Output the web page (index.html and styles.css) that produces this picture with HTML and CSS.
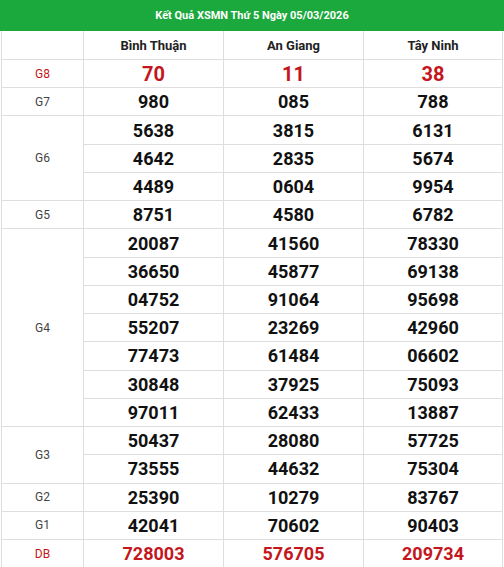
FILE: index.html
```html
<!DOCTYPE html>
<html lang="vi">
<head>
<meta charset="utf-8">
<title>Kết Quả XSMN</title>
<link rel="stylesheet" href="styles.css">
</head>
<body>
<div class="title">Kết Quả XSMN Thứ 5 Ngày 05/03/2026</div>
<div class="grid">
  <div class="cell corner"></div>
  <div class="cell prov">Bình Thuận</div>
  <div class="cell prov">An Giang</div>
  <div class="cell prov">Tây Ninh</div>

  <div class="cell label red">G8</div>
  <div class="cell num big red">70</div>
  <div class="cell num big red">11</div>
  <div class="cell num big red">38</div>

  <div class="cell label">G7</div>
  <div class="cell num">980</div>
  <div class="cell num">085</div>
  <div class="cell num">788</div>

  <div class="cell label span3">G6</div>
  <div class="cell num">5638</div>
  <div class="cell num">3815</div>
  <div class="cell num">6131</div>
  <div class="cell num">4642</div>
  <div class="cell num">2835</div>
  <div class="cell num">5674</div>
  <div class="cell num">4489</div>
  <div class="cell num">0604</div>
  <div class="cell num">9954</div>

  <div class="cell label">G5</div>
  <div class="cell num">8751</div>
  <div class="cell num">4580</div>
  <div class="cell num">6782</div>

  <div class="cell label span7">G4</div>
  <div class="cell num">20087</div>
  <div class="cell num">41560</div>
  <div class="cell num">78330</div>
  <div class="cell num">36650</div>
  <div class="cell num">45877</div>
  <div class="cell num">69138</div>
  <div class="cell num">04752</div>
  <div class="cell num">91064</div>
  <div class="cell num">95698</div>
  <div class="cell num">55207</div>
  <div class="cell num">23269</div>
  <div class="cell num">42960</div>
  <div class="cell num">77473</div>
  <div class="cell num">61484</div>
  <div class="cell num">06602</div>
  <div class="cell num">30848</div>
  <div class="cell num">37925</div>
  <div class="cell num">75093</div>
  <div class="cell num">97011</div>
  <div class="cell num">62433</div>
  <div class="cell num">13887</div>

  <div class="cell label span2">G3</div>
  <div class="cell num">50437</div>
  <div class="cell num">28080</div>
  <div class="cell num">57725</div>
  <div class="cell num">73555</div>
  <div class="cell num">44632</div>
  <div class="cell num">75304</div>

  <div class="cell label">G2</div>
  <div class="cell num">25390</div>
  <div class="cell num">10279</div>
  <div class="cell num">83767</div>

  <div class="cell label">G1</div>
  <div class="cell num">42041</div>
  <div class="cell num">70602</div>
  <div class="cell num">90403</div>

  <div class="cell label red">DB</div>
  <div class="cell num red">728003</div>
  <div class="cell num red">576705</div>
  <div class="cell num red">209734</div>
</div>
</body>
</html>
```

FILE: styles.css
```css
html, body {
  margin: 0;
  padding: 0;
  overflow: hidden;
  background: #fff;
}
body {
  font-family: Roboto, "Liberation Sans", sans-serif;
  color: #111;
}
.title {
  height: 31px;
  background: #1ba83c;
  color: #fff;
  font-weight: 700;
  font-size: 11px;
  display: flex;
  align-items: center;
  justify-content: center;
}
.grid {
  margin-left: 1px;
  width: 500px;
  padding: 0 1px;
  background: #dedede;
  display: grid;
  grid-template-columns: 81px 139px 139px 138px;
  grid-template-rows: 28px repeat(18, 27.235px);
  column-gap: 1px;
  row-gap: 1px;
}
.cell {
  background: #fff;
  display: flex;
  align-items: center;
  justify-content: center;
}
.prov {
  font-size: 13px;
  font-weight: 700;
  color: #222;
}
.label {
  font-size: 12px;
  color: #444;
}
.num {
  font-size: 18px;
  font-weight: 700;
  color: #111;
}
.big {
  font-size: 20px;
}
.red {
  color: #c4161c;
}
.span2 { grid-row: span 2; }
.span3 { grid-row: span 3; }
.span7 { grid-row: span 7; }
```
